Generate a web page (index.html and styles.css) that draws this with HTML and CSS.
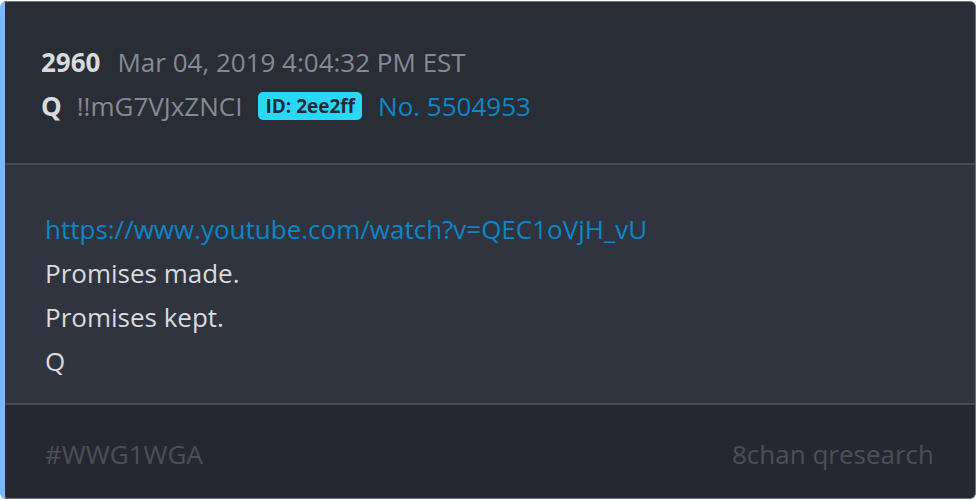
FILE: index.html
```html
<!DOCTYPE html>
<html lang="en">
<head>
  <meta charset="UTF-8" />
  <meta name="viewport" content="width=device-width, initial-scale=1.0" />
  <title>Post 2960</title>
  <link rel="stylesheet" href="styles.css">
</head>
<body>
  <div class="post">
    <div class="post-header">
      <div class="post-line">
        <span class="post-num">2960</span>
        <span class="post-date">Mar 04, 2019 4:04:32 PM EST</span>
      </div>
      <div class="post-line">
        <span class="post-name">Q</span>
        <span class="post-trip">!!mG7VJxZNCI</span>
        <span class="post-id">ID: 2ee2ff</span>
        <a class="post-link" href="#">No. 5504953</a>
      </div>
    </div>
    <div class="post-body">
      <p><a class="post-link" href="#">https://www.youtube.com/watch?v=QEC1oVjH_vU</a></p>
      <p>Promises made.</p>
      <p>Promises kept.</p>
      <p>Q</p>
    </div>
    <div class="post-footer">
      <span>#WWG1WGA</span>
      <span>8chan qresearch</span>
    </div>
  </div>
</body>
</html>
```

FILE: styles.css
```css
body {
  margin: 0;
  background: #ffffff;
  font-family: "Open Sans", "Noto Sans", sans-serif;
}
.post {
  width: 976px;
  height: 498px;
  box-sizing: border-box;
  margin-top: 1px;
  border: 1px solid #6e737e;
  border-left: 5px solid #7ab8ff;
  border-radius: 6px;
  overflow: hidden;
  background: #252830;
  display: flex;
  flex-direction: column;
}
.post-header {
  background: #292d36;
  padding: 38px 36px 0;
  height: 163px;
  box-sizing: border-box;
  border-bottom: 2px solid #474b55;
}
.post-line {
  display: flex;
  align-items: center;
  height: 44px;
  font-size: 26px;
}
.post-num {
  font-weight: 700;
  color: #d8dadd;
  margin-right: 17px;
}
.post-date {
  color: #858a96;
}
.post-name {
  font-weight: 700;
  color: #d8dadd;
  margin-right: 15px;
}
.post-trip {
  color: #858a96;
  margin-right: 16px;
}
.post-id {
  background: #2ad8f6;
  color: #1f2b35;
  font-weight: 700;
  font-size: 19px;
  line-height: 28px;
  border-radius: 5px;
  padding: 0 7px;
  margin-right: 16px;
}
.post-link {
  color: #0c86c8;
  text-decoration: none;
}
.post-body {
  background: #2f343e;
  padding: 42px 40px 0;
  height: 240px;
  box-sizing: border-box;
  border-bottom: 2px solid #474b55;
  color: #d9dbdf;
  font-size: 26px;
}
.post-body p {
  margin: 0;
  height: 44px;
  line-height: 44px;
}
.post-footer {
  flex: 1;
  display: flex;
  justify-content: space-between;
  align-items: center;
  padding: 4px 41px 0 40px;
  color: #4a4f5a;
  font-size: 26px;
}
```
